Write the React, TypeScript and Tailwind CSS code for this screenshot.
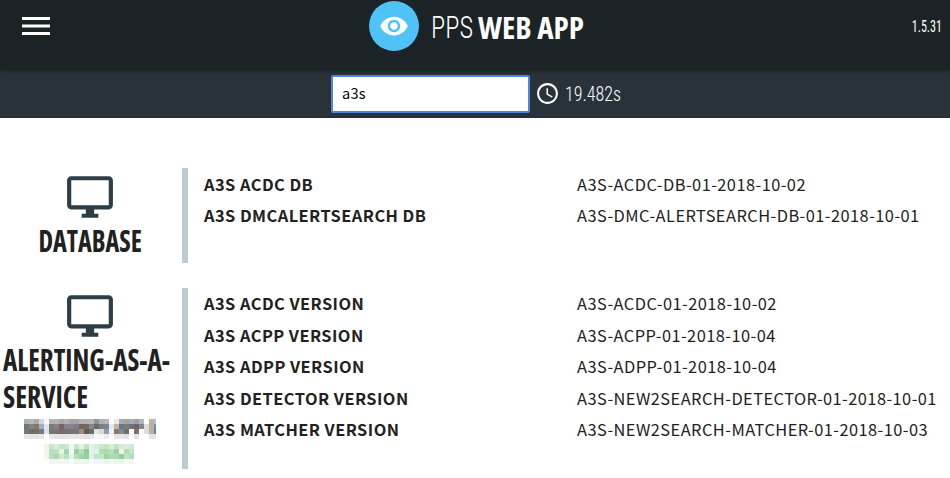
import { MdAccessTime, MdVisibility } from 'react-icons/md';

type Row = { label: string; value: string };

const databaseRows: Row[] = [
  { label: 'A3S ACDC DB', value: 'A3S-ACDC-DB-01-2018-10-02' },
  { label: 'A3S DMCALERTSEARCH DB', value: 'A3S-DMC-ALERTSEARCH-DB-01-2018-10-01' },
];

const alertingRows: Row[] = [
  { label: 'A3S ACDC VERSION', value: 'A3S-ACDC-01-2018-10-02' },
  { label: 'A3S ACPP VERSION', value: 'A3S-ACPP-01-2018-10-04' },
  { label: 'A3S ADPP VERSION', value: 'A3S-ADPP-01-2018-10-04' },
  { label: 'A3S DETECTOR VERSION', value: 'A3S-NEW2SEARCH-DETECTOR-01-2018-10-01' },
  { label: 'A3S MATCHER VERSION', value: 'A3S-NEW2SEARCH-MATCHER-01-2018-10-03' },
];

// Colours of the pixelated host name, one string per row of 5px cells.
const hostCells = [
  'b4aeaa b0b9c8 b8a898 c5d8ec fafafa b8b2ae b4b4b8 a9a5a8 adb0b8 a8a4a6 a8a2aa b2b4bb b5b2b0 b5b5b8 909398 adb1b8 b6b6b6 ffffff f2e4dc a3adb8 a5a39c a7acb2 a29ca3 afb5c0 ffffff bdb2a2 b4bed4',
  '687874 848488 87796b a0b0c4 e6e6e8 7d7876 828486 7b626a 848488 85828a 807c88 7a5f5a 6b6b66 8a8680 66686c 7c7f84 7686a0 e8e8ec c4b6a4 66788a 7d7c74 6a7478 75626a 868686 dcdcde bfb09c 6f8cc8',
  '747a78 6c6c6c 7c6c58 6e7e94 e2e2e4 777777 757575 7a6a6e 707074 757279 77747c a48a7c 5c5c56 6c6c6a d4e6f8 ecd0c6 8c9cb4 f0f0f0 8a7a6a 7c8a9c 707068 fafafa 806e74 ffffff dedee0 bcae98 6080c0',
  'e6e6e6 e4e4e6 e6e4e2 e4e6ea ffffff e8e8e8 e4e4e6 e6e2e4 e4e4e6 e6e6e6 e6e4e6 e8e6e4 e2e2e2 e6e6e6 f8f8fa f6f6f8 eaecf0 ffffff e8e6e4 e6e6e8 e2e2e4 ffffff e6e2e4 ffffff ffffff e6e4e0 e2e6f2',
];

const addressCells = [
  'f2f5e8 c8e8d2 d6efda c4e4c8 c8e8cc f0f9f0 c8e6cc e4f3e4 bfe2c4 e2f4ee d4eed8 cbe9cf c8e4b8 d6efd8 c2e4c2 d4ecd6 daf0dc cfebd2',
  'fbf3e4 b4dfc8 bce2c0 e4f3e4 a4d6ac f4faf2 98d09e b8dfbe 92cf98 e0f4ee e2f3e4 b0dcb6 aedca8 b6dfbc 9ad2a0 eaf5e4 b0dcbc c2e6cc',
  'fbf3e6 b6e0c8 aadab2 d4e8c4 b8dfc8 e4f3e4 b2ddb8 a2d6a8 94d09a e2f3e8 c0e4cc c4e6cc a0d4a0 acdcb4 a6d8b4 92d098 c0e4c4 b0deba',
  'fffdfa eef8f0 f0f8f0 f2f8ec edf7ee f6fbf6 ecf6ec eef6ee ecf6ec f8fdfa f2f9f2 eef7f0 eaf6ea f0f8f0 ecf6ee eaf6ea f4faf4 edf8f0',
];

function Mosaic({ rows, width, label }: { rows: string[]; width: number; label: string }) {
  return (
    <svg width={width} height={20} viewBox={`0 0 ${width} 20`} shapeRendering="crispEdges" role="img" aria-label={label}>
      {rows.map((row, y) =>
        row.split(' ').map((c, x) => <rect key={`${x}-${y}`} x={x * 5} y={y * 5} width={5} height={5} fill={`#${c}`} />),
      )}
    </svg>
  );
}

function Monitor() {
  return (
    <svg viewBox="0 0 24 24" fill="currentColor" className="size-[50px] shrink-0 text-[#2e3e47]">
      <path d="M21 2H3c-1.1 0-2 .9-2 2v12c0 1.1.9 2 2 2h7v2H8v2h8v-2h-2v-2h7c1.1 0 2-.9 2-2V4c0-1.1-.9-2-2-2zm0 14H3V4h18v12z" />
    </svg>
  );
}

function Rows({ rows, spacing }: { rows: Row[]; spacing: string }) {
  return (
    <div
      className={`flex-1 border-l-[6px] border-[#bccad2] pl-4 font-['Noto_Sans_CJK_SC',sans-serif] text-[16.4px] tracking-[0.45px] text-[#212121] ${spacing}`}
    >
      {rows.map((r) => (
        <div key={r.label} className="flex whitespace-nowrap">
          <div className="w-[373px] shrink-0 font-bold">{r.label}</div>
          <div>{r.value}</div>
        </div>
      ))}
    </div>
  );
}

export default function App() {
  return (
    <div className="h-[478px] w-[950px] overflow-hidden bg-white font-['Open_Sans',sans-serif]">
      <header className="relative flex h-[70px] items-start justify-between bg-[#1c2326] text-white shadow-[0_1px_4px_rgba(0,0,0,0.4)]">
        <button aria-label="Menu" className="mt-[17px] ml-[22px] w-[347px]">
          <svg width="28" height="18" viewBox="0 0 28 18" fill="#fff">
            <path d="M0 0h28v3H0zM0 7.4h28v3.2H0zM0 15h28v3H0z" />
          </svg>
        </button>
        <div className="mt-px flex items-start">
          <span className="flex size-[50px] items-center justify-center rounded-full bg-[#4fc3f7]">
            <MdVisibility className="size-[30px]" />
          </span>
          <h1 className="ml-[12px] flex w-[155px] text-[31px] whitespace-nowrap [font-stretch:75%]">
            <span className="block w-[47px] origin-left scale-x-[0.85] font-['Roboto',sans-serif] leading-[54px] font-light">PPS</span>
            <span className="block origin-left font-bold leading-[52px]">WEB APP</span>
          </h1>
        </div>
        <div className="flex-1 pr-[8px] text-right font-['Roboto',sans-serif] text-[16.8px] leading-[52px] [font-stretch:75%]">
          <span className="inline-block origin-right scale-x-[0.72]">1.5.31</span>
        </div>
      </header>

      <div className="flex h-[48px] items-start border-b border-[#232b38] bg-[#283238] pt-[5px] pl-[331px] text-white">
        <input
          type="text"
          defaultValue="a3s"
          className="h-[38px] w-[199px] rounded-[2px] border-2 border-[#4f86db] bg-white pb-[3px] pl-[9px] font-['Noto_Sans_CJK_SC',sans-serif] text-[14.6px] tracking-[0.2px] text-black outline-none"
        />
        <MdAccessTime className="mt-[6px] ml-[5px] size-[25px]" />
        <span className="ml-[5px] origin-left scale-x-[0.9] font-['Roboto',sans-serif] text-[20px] leading-[39px] font-[350] [font-stretch:75%]">
          19.482s
        </span>
      </div>

      <main className="flex flex-col gap-[25px] pt-[50px]">
        <section className="flex h-[95px]">
          <div className="flex w-[182px] flex-col items-center pt-[4px] pr-[2px]">
            <Monitor />
            <h2 className="mt-px scale-x-[0.89] text-[29.4px] leading-[37px] font-bold text-[#212121] [font-stretch:75%]">
              DATABASE
            </h2>
          </div>
          <Rows rows={databaseRows} spacing="pt-px leading-[31px]" />
        </section>

        <section className="flex h-[181px]">
          <div className="flex w-[182px] flex-col items-center pt-[3px] pr-[2px]">
            <Monitor />
            <h2 className="mt-px w-full pl-[3px] text-[29.4px] leading-[37px] font-bold whitespace-nowrap text-[#212121] [font-stretch:75%]">
              <span className="block origin-left scale-x-[0.922]">ALERTING-AS-A-</span>
              <span className="block origin-left scale-x-[0.945]">SERVICE</span>
            </h2>
            <div className="mt-[3px] flex flex-col items-center gap-[5px]">
              <Mosaic rows={hostCells} width={132} label="Host name" />
              <div className="pr-[2px]">
                <Mosaic rows={addressCells} width={90} label="Host address" />
              </div>
            </div>
          </div>
          <Rows rows={alertingRows} spacing="pt-[0.3px] leading-[31.5px]" />
        </section>
      </main>
    </div>
  );
}
